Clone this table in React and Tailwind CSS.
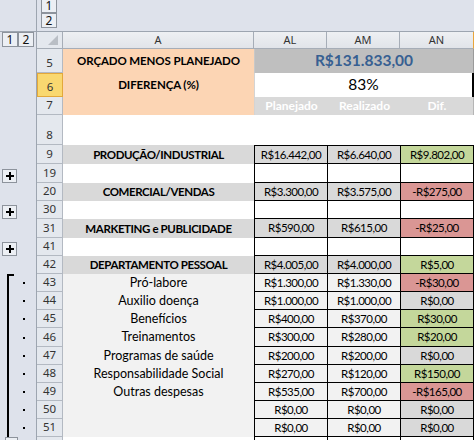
import React from "react";

const CELL = "font-[family-name:Lato,'Liberation_Sans',sans-serif]";
const UI = "font-[family-name:'Noto_Sans','DejaVu_Sans',sans-serif]";

function OutBtn({ children }) {
  return (
    <div className={`w-[16px] h-[15px] shrink-0 border border-[#8d939c] bg-[#eceff4] flex items-center justify-center text-[12px] leading-[12px] text-[#111] ${UI}`}>
      {children}
    </div>
  );
}

function PlusBtn() {
  return (
    <div className="w-[15px] h-[14px] ml-[2px] border border-[#8d939c] bg-[#eceff4] flex items-center justify-center">
      <svg width="8" height="8" viewBox="0 0 8 8">
        <rect x="0" y="3" width="8" height="2" fill="#000" />
        <rect x="3" y="0" width="2" height="8" fill="#000" />
      </svg>
    </div>
  );
}

function Outline({ kind }) {
  if (kind === "plus") {
    return (
      <div className="w-[37px] shrink-0 border-r border-[#9da5b0] bg-[#dee2eb] flex items-end">
        <PlusBtn />
      </div>
    );
  }
  if (kind === "top") {
    return (
      <div className="w-[37px] shrink-0 border-r border-[#9da5b0] bg-[#dee2eb] flex items-center">
        <div className="self-stretch w-[7px] ml-[7px] border-l-2 border-t-2 border-black" />
        <div className="w-[2px] h-[2px] bg-black ml-[9px]" />
      </div>
    );
  }
  if (kind === "line") {
    return (
      <div className="w-[37px] shrink-0 border-r border-[#9da5b0] bg-[#dee2eb] flex items-center">
        <div className="self-stretch w-[2px] ml-[7px] bg-black" />
        <div className="w-[2px] h-[2px] bg-black ml-[14px]" />
      </div>
    );
  }
  if (kind === "end") {
    return (
      <div className="w-[37px] shrink-0 border-r border-[#9da5b0] bg-[#dee2eb] flex items-start">
        <div className="w-[13px] h-[15px] ml-[5px] border border-[#8d939c] bg-[#eceff4]" />
      </div>
    );
  }
  return <div className="w-[37px] shrink-0 border-r border-[#9da5b0] bg-[#dee2eb]" />;
}

function RowHead({ n, active }) {
  if (active) {
    return (
      <div className={`w-[26px] shrink-0 border border-[#e3a83a] bg-[#f9d870] flex items-end justify-center pb-[1px] text-[11.5px] leading-[16px] text-[#333] ${UI}`}>
        {n}
      </div>
    );
  }
  return (
    <div className={`w-[26px] shrink-0 border-r border-b border-[#b3b9c2] bg-[#e4e8ee] flex items-end justify-center pb-[1px] text-[11.5px] leading-[16px] text-[#333] ${UI}`}>
      {n}
    </div>
  );
}

const DIF = {
  g: "bg-[#c4d79b]",
  r: "bg-[#da9694]",
  z: "bg-[#d9d9d9]",
  w: "bg-white",
};

const rows = [
  { n: 9, h: "h-[19px]", t: "cat", a: "PRODUÇÃO/INDUSTRIAL", v: ["R$16.442,00", "R$6.640,00", "R$9.802,00"], d: "g", top: true },
  { n: 19, h: "h-[19px]", t: "blank", o: "plus" },
  { n: 20, h: "h-[18px]", t: "cat", a: "COMERCIAL/VENDAS", v: ["R$3.300,00", "R$3.575,00", "-R$275,00"], d: "r" },
  { n: 30, h: "h-[18px]", t: "blank", o: "plus" },
  { n: 31, h: "h-[19px]", t: "cat", a: "MARKETING e PUBLICIDADE", v: ["R$590,00", "R$615,00", "-R$25,00"], d: "r" },
  { n: 41, h: "h-[18px]", t: "blank", o: "plus" },
  { n: 42, h: "h-[18px]", t: "cat", a: "DEPARTAMENTO PESSOAL", v: ["R$4.005,00", "R$4.000,00", "R$5,00"], d: "g" },
  { n: 43, h: "h-[18px]", t: "det", o: "top", a: "Pró-labore", v: ["R$1.300,00", "R$1.330,00", "-R$30,00"], d: "r" },
  { n: 44, h: "h-[18px]", t: "det", o: "line", a: "Auxilio doença", v: ["R$1.000,00", "R$1.000,00", "R$0,00"], d: "z" },
  { n: 45, h: "h-[18px]", t: "det", o: "line", a: "Benefícios", v: ["R$400,00", "R$370,00", "R$30,00"], d: "g" },
  { n: 46, h: "h-[19px]", t: "det", o: "line", a: "Treinamentos", v: ["R$300,00", "R$280,00", "R$20,00"], d: "g" },
  { n: 47, h: "h-[18px]", t: "det", o: "line", a: "Programas de saúde", v: ["R$200,00", "R$200,00", "R$0,00"], d: "z" },
  { n: 48, h: "h-[18px]", t: "det", o: "line", a: "Responsabilidade Social", v: ["R$270,00", "R$120,00", "R$150,00"], d: "g" },
  { n: 49, h: "h-[18px]", t: "det", o: "line", a: "Outras despesas", v: ["R$535,00", "R$700,00", "-R$165,00"], d: "r" },
  { n: 50, h: "h-[18px]", t: "det", o: "line", a: "", v: ["R$0,00", "R$0,00", "R$0,00"], d: "z" },
  { n: 51, h: "h-[18px]", t: "det", o: "line", a: "", v: ["R$0,00", "R$0,00", "R$0,00"], d: "z" },
  { n: 52, h: "h-[18px]", t: "blank", o: "end" },
];

function DataRow({ r }) {
  const rowBg = r.t === "cat" ? "bg-[#d9d9d9]" : r.t === "det" ? "bg-[#f2f2f2]" : "bg-white";
  const aText =
    r.t === "cat"
      ? "font-bold text-[11.5px] tracking-[-0.4px]"
      : "text-[12.5px]";
  const v = r.v || ["", "", ""];
  const topB = r.top ? "border-t" : "";
  return (
    <div className={`flex ${r.h}`}>
      <Outline kind={r.o} />
      <RowHead n={r.n} />
      <div className={`w-[191px] shrink-0 ${rowBg} flex items-center justify-center ${CELL} ${aText} text-black`}>
        {r.a}
      </div>
      <div className={`w-[74px] shrink-0 border-l border-r border-b ${topB} border-black ${rowBg} flex items-center justify-center ${CELL} text-[11.5px] tracking-[-0.5px] text-black`}>
        {v[0]}
      </div>
      <div className={`w-[73px] shrink-0 border-r border-b ${topB} border-black ${rowBg} flex items-center justify-center ${CELL} text-[11.5px] tracking-[-0.5px] text-black`}>
        {v[1]}
      </div>
      <div className={`w-[73px] shrink-0 border-r border-b ${topB} border-black ${r.d ? DIF[r.d] : "bg-white"} flex items-center justify-center ${CELL} text-[11.5px] tracking-[-0.5px] text-black`}>
        {v[2]}
      </div>
    </div>
  );
}

export default function App() {
  return (
    <div className="w-[474px] h-[440px] overflow-hidden bg-white">
      {/* column outline band */}
      <div className="h-[32px] flex border-b border-[#9da5b0] bg-[#dee2eb]">
        <div className="w-[37px] shrink-0 border-r border-[#9da5b0]" />
        <div className="flex flex-col ml-[4px] -mt-[2px]">
          <OutBtn>1</OutBtn>
          <OutBtn>2</OutBtn>
        </div>
      </div>

      {/* column headers */}
      <div className={`h-[17px] flex ${UI} text-[11px] text-[#333]`}>
        <div className="w-[37px] shrink-0 border-r border-[#9da5b0] bg-[#dee2eb] flex items-start pl-[2px]">
          <OutBtn>1</OutBtn>
          <OutBtn>2</OutBtn>
        </div>
        <div className="w-[26px] shrink-0 border-r border-b border-[#a6adb7] bg-[#e4e8ee] flex items-end justify-end pr-[4px] pb-[3px]">
          <svg width="10" height="10" viewBox="0 0 10 10">
            <polygon points="10,0 10,10 0,10" fill="#b9bec5" />
          </svg>
        </div>
        <div className="w-[191px] shrink-0 border-r border-b border-[#a6adb7] bg-gradient-to-b from-[#eef0f3] to-[#e1e4e9] flex items-center justify-center">
          A
        </div>
        <div className="w-[73px] shrink-0 border-r border-b border-[#a6adb7] bg-gradient-to-b from-[#eef0f3] to-[#e1e4e9] flex items-center justify-center">
          AL
        </div>
        <div className="w-[73px] shrink-0 border-r border-b border-[#a6adb7] bg-gradient-to-b from-[#eef0f3] to-[#e1e4e9] flex items-center justify-center">
          AM
        </div>
        <div className="w-[74px] shrink-0 border-r border-b border-r-[#e9a53a] border-b-[#a6adb7] bg-gradient-to-b from-[#eef0f3] to-[#e1e4e9] flex items-center justify-center">
          AN
        </div>
      </div>

      {/* row 5 */}
      <div className="h-[24px] flex">
        <Outline />
        <RowHead n={5} />
        <div className={`w-[191px] shrink-0 bg-[#fcd5b4] flex items-center justify-center ${CELL} font-bold text-[11.5px] tracking-[-0.1px] text-black`}>
          ORÇADO MENOS PLANEJADO
        </div>
        <div className={`w-[220px] shrink-0 border-l border-r border-[#c8c8c8] border-r-[#9a9a9a] bg-[#bfbfbf] flex items-center justify-center ${CELL} font-bold text-[15.5px] text-[#376092]`}>
          R$131.833,00
        </div>
      </div>

      {/* row 6 */}
      <div className="h-[24px] flex">
        <Outline />
        <RowHead n={6} active />
        <div className={`w-[191px] shrink-0 bg-[#fcd5b4] flex items-center justify-center ${CELL} font-bold text-[11.5px] tracking-[-0.1px] text-black`}>
          DIFERENÇA (%)
        </div>
        <div className={`w-[220px] shrink-0 border-l border-[#d4d4d4] border-r-2 border-r-black bg-white flex items-center justify-center ${CELL} text-[15.5px] text-black`}>
          83%
        </div>
      </div>

      {/* row 7 */}
      <div className="h-[18px] flex">
        <Outline />
        <RowHead n={7} />
        <div className="w-[191px] shrink-0 bg-[#fcd5b4]" />
        <div className={`w-[220px] shrink-0 flex border-l border-r border-[#d4d4d4] border-r-[#b5b5b5] bg-[#d9d9d9] ${CELL} font-bold text-[12px] text-white`}>
          <div className="w-[73px] flex items-center justify-center">Planejado</div>
          <div className="w-[73px] flex items-center justify-center">Realizado</div>
          <div className="w-[72px] flex items-center justify-center">Dif.</div>
        </div>
      </div>

      {/* row 8 */}
      <div className="h-[30px] flex">
        <Outline />
        <RowHead n={8} />
        <div className="w-[411px] shrink-0 bg-white" />
      </div>

      {rows.map((r) => (
        <DataRow key={r.n} r={r} />
      ))}
    </div>
  );
}
